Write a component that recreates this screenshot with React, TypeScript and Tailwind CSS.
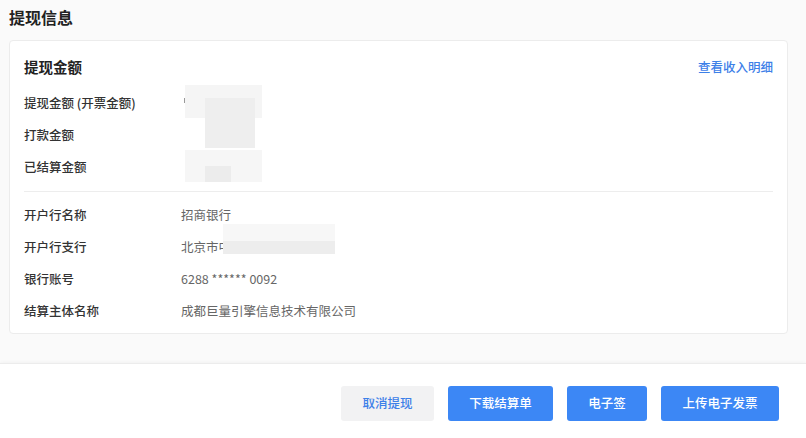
import React from "react";

const font = { fontFamily: '"Noto Sans CJK SC", "Noto Sans", sans-serif' };

function Row({ label, value, children }: { label: string; value?: string; children?: React.ReactNode }) {
  return (
    <div className="flex h-[32px] items-center text-[12.5px]">
      <div className="w-[157px] shrink-0 font-medium text-[#333]">{label}</div>
      <div className="relative flex-1 text-[#666]">
        {value}
        {children}
      </div>
    </div>
  );
}

export default function App() {
  return (
    <div style={font} className="flex h-[438px] w-full flex-col overflow-hidden bg-[#fafafa]">
      <div className="pl-[9px] pr-[18px] pt-[6px]">
        <div className="h-[22px] text-[16px] font-bold leading-[22px] text-[#222]">提现信息</div>
        <div className="mt-[12px] rounded-[4px] border border-[#ececec] bg-white px-[14px] pb-[6px] pt-[16px]">
          <div className="flex h-[20px] items-center justify-between">
            <div className="text-[14.5px] font-bold text-[#222]">提现金额</div>
            <div className="text-[12.5px] font-medium text-[#3d80e8]">查看收入明细</div>
          </div>
          <div className="relative mt-[10px]">
            <Row label="提现金额 (开票金额)" />
            <Row label="打款金额" />
            <Row label="已结算金额" />
            <div className="absolute left-[161px] top-[-2px] h-[33px] w-[77px] bg-[#f5f5f5]" />
            <div className="absolute left-[160px] top-[11px] h-[5px] w-[1px] bg-[#999]" />
            <div className="absolute left-[181px] top-[11px] h-[50px] w-[50px] bg-[#eeeeee]" />
            <div className="absolute left-[161px] top-[63px] h-[32px] w-[77px] bg-[#f6f6f6]" />
            <div className="absolute left-[181px] top-[79px] h-[16px] w-[26px] bg-[#ececec]" />
          </div>
          <div className="mt-[8px] h-px bg-[#ededed]" />
          <div className="mt-[7px]">
            <Row label="开户行名称" value="招商银行" />
            <Row label="开户行支行" value="北京市中">
              <div className="absolute left-[42px] top-[-14px] h-[30px] w-[112px] bg-[#f7f7f7]" />
              <div className="absolute left-[42px] top-[3px] h-[13px] w-[112px] bg-[#ededed]" />
            </Row>
            <Row label="银行账号" value="6288 ****** 0092" />
            <Row label="结算主体名称" value="成都巨量引擎信息技术有限公司" />
          </div>
        </div>
      </div>
      <div className="mt-[29px] flex flex-1 justify-end gap-[14px] border-t border-[#ececec] bg-white pr-[27px] pt-[22px] shadow-[0_-1px_3px_rgba(0,0,0,0.03)]">
        <button className="h-[35px] w-[93px] rounded-[3px] bg-[#f2f2f3] text-[12.5px] font-medium text-[#3d80e8]">取消提现</button>
        <button className="h-[35px] w-[105px] rounded-[3px] bg-[#3c87f5] text-[12.5px] font-medium text-white">下载结算单</button>
        <button className="h-[35px] w-[80px] rounded-[3px] bg-[#3c87f5] text-[12.5px] font-medium text-white">电子签</button>
        <button className="h-[35px] w-[118px] rounded-[3px] bg-[#3c87f5] text-[12.5px] font-medium text-white">上传电子发票</button>
      </div>
    </div>
  );
}
